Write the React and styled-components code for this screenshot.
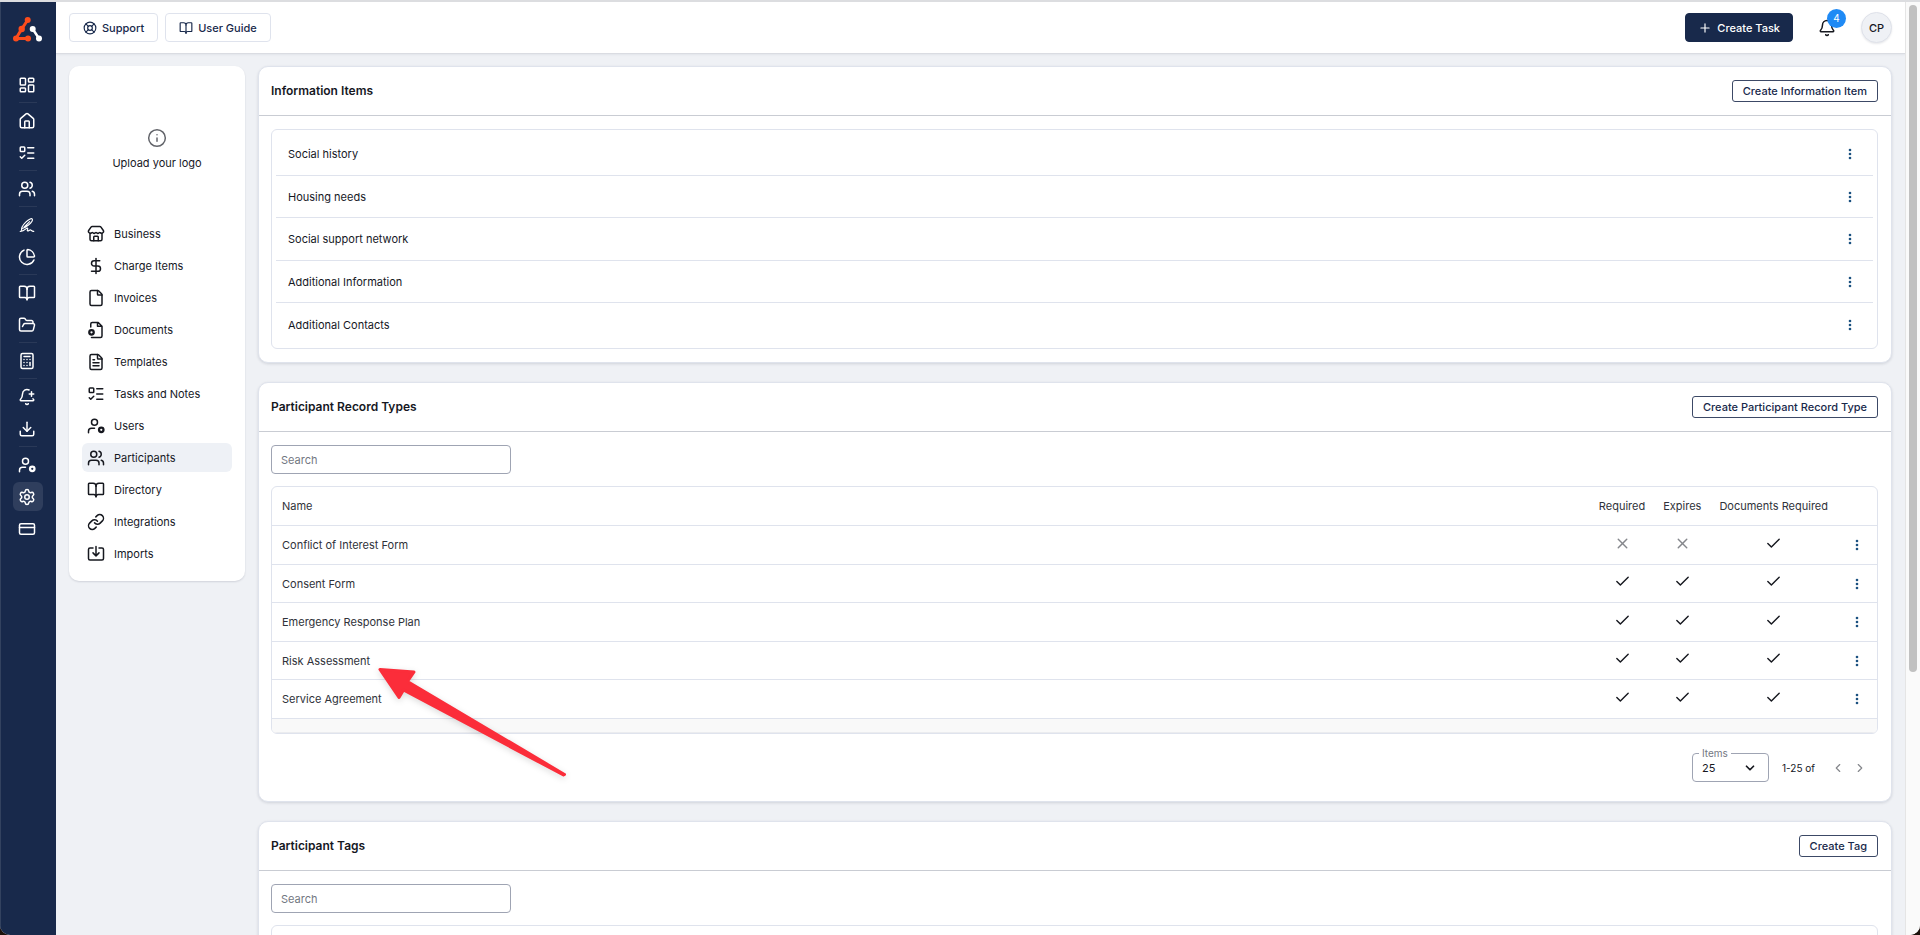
import styled, { createGlobalStyle } from "styled-components";
import {
    BellPlus, Bell, BookOpen, Calculator, Check, ChevronDown, ChevronLeft, ChevronRight, CreditCard,
    DollarSign, Download, File, FileText, FolderOpen, House, Info, LayoutDashboard, LifeBuoy, Link,
    ListTodo, ChartPie, Plus, Settings, Store, Users, X
} from "lucide-react";

const GlobalStyle = createGlobalStyle`
    * {
        box-sizing: border-box;
    }
    body {
        margin: 0;
        background-color: #1d120c;
        color: #16181f;
        font-family: Inter, "Liberation Sans", sans-serif;
        font-size: 11px;
        line-height: 16px;
    }
    button, input, select {
        font: inherit;
        color: inherit;
    }
    h1, h2, p, ul {
        margin: 0;
        padding: 0;
    }
`;

const Shell = styled.div`
    display: flex;
    height: 100vh;
    border-top: 2px solid #dcdde0;
    border-radius: 0 0 10px 10px;
    background-color: #eff1f5;
    overflow: hidden;
`;

const Sidebar = styled.nav`
    flex: none;
    display: flex;
    flex-direction: column;
    gap: 3px;
    width: 56px;
    padding: 13px 13px 0 12px;
    border-left: 1px solid #33425f;
    background-color: #18294b;
    svg {
        display: block;
    }
`;

const LogoLink = styled.a`
    height: 52px;
`;

const SideLink = styled.a`
    display: flex;
    align-items: center;
    height: 29px;
    padding-left: 5px;
    border-radius: 6px;
    background-color: ${({ $active }) => $active ? "#2f3e5d" : "transparent"};
    color: white;
`;

const SideDivider = styled.div`
    width: 18px;
    height: 1px;
    margin-left: 6px;
    background-color: #2a3958;
`;

const Page = styled.div`
    flex: 1;
    min-width: 0;
    display: flex;
    flex-direction: column;
`;

const Header = styled.header`
    flex: none;
    display: flex;
    align-items: center;
    gap: 7px;
    height: 52px;
    padding: 0 13px;
    border-bottom: 1px solid #dadce2;
    background-color: white;
    box-shadow: 0 1px 2px rgba(20, 30, 60, .06);
`;

const HeaderButton = styled.button`
    display: flex;
    align-items: center;
    gap: 5px;
    height: 29px;
    padding: 0 ${({ $primary }) => $primary ? "12px" : "13px"};
    border: 1px solid ${({ $primary }) => $primary ? "#18294b" : "#dfe3ed"};
    border-radius: 4px;
    background-color: ${({ $primary }) => $primary ? "#18294b" : "white"};
    color: ${({ $primary }) => $primary ? "white" : "#18294b"};
    font-weight: 500;
`;

const HeaderRight = styled.div`
    display: flex;
    align-items: center;
    gap: 25px;
    margin-left: auto;
`;

const BellButton = styled.button`
    position: relative;
    display: flex;
    padding: 0;
    border: none;
    background: none;
`;

const BellCount = styled.span`
    position: absolute;
    top: -10px;
    right: -10px;
    width: 19px;
    height: 19px;
    border-radius: 50%;
    background-color: #1f8af5;
    color: white;
    font-size: 10px;
    line-height: 19px;
    text-align: center;
`;

const Avatar = styled.button`
    width: 31px;
    height: 31px;
    padding: 0;
    border: 1px solid #dfe2ea;
    border-radius: 50%;
    background-color: #eff1f5;
    box-shadow: 0 1px 2px rgba(20, 30, 60, .1);
    font-weight: 500;
`;

const Content = styled.div`
    flex: 1;
    min-height: 0;
    display: flex;
    align-items: flex-start;
    gap: 13px;
    padding: 12px 13px;
    overflow: hidden;
`;

const Panel = styled.aside`
    flex: none;
    width: 176px;
    padding: 62px 13px 13px;
    border-radius: 10px;
    background-color: white;
    box-shadow: 0 1px 2px rgba(20, 30, 60, .14);
`;

const Upload = styled.button`
    display: flex;
    flex-direction: column;
    align-items: center;
    gap: 7px;
    width: 100%;
    margin-bottom: 48px;
    padding: 0;
    border: none;
    background: none;
    svg {
        color: #63656b;
    }
`;

const Menu = styled.ul`
    display: flex;
    flex-direction: column;
    gap: 3px;
    list-style: none;
`;

const MenuLink = styled.a`
    display: flex;
    align-items: center;
    gap: 9px;
    height: 29px;
    padding-left: 5px;
    border-radius: 6px;
    background-color: ${({ $active }) => $active ? "#eef1f6" : "transparent"};
    color: #16181f;
    text-decoration: none;
`;

const Main = styled.main`
    flex: 1;
    min-width: 0;
    display: flex;
    flex-direction: column;
    gap: 19px;
`;

const Card = styled.section`
    border: 1px solid #dfe3ec;
    border-radius: 10px;
    background-color: white;
    box-shadow: 0 1px 3px rgba(20, 30, 60, .14);
`;

const CardHeader = styled.div`
    display: flex;
    align-items: center;
    justify-content: space-between;
    height: 49px;
    padding: 0 13px 0 12px;
    border-bottom: 1px solid #c9ccd3;
    h2 {
        font-size: 12px;
        font-weight: 600;
    }
`;

const CardBody = styled.div`
    display: flex;
    flex-direction: column;
    gap: 12px;
    padding: 13px 13px 13px 12px;
`;

const OutlineButton = styled.button`
    height: 22px;
    padding: 0 10px;
    border: 1px solid #3c4966;
    border-radius: 3px;
    background-color: white;
    color: #18294b;
    font-weight: 500;
    line-height: 20px;
`;

const ItemList = styled.ul`
    padding: 3px 4px 2px;
    border: 1px solid #dfe3ed;
    border-radius: 6px;
    list-style: none;
`;

const Item = styled.li`
    display: flex;
    align-items: center;
    justify-content: space-between;
    height: 43px;
    padding: 0 17px 0 12px;
    border-bottom: 1px solid #dfe3ed;
    &:nth-child(even) {
        height: 42px;
    }
    &:last-child {
        border-bottom: none;
    }
`;

const DotsButton = styled.button`
    display: inline-flex;
    padding: 0;
    border: none;
    background: none;
    color: #1b5180;
    vertical-align: middle;
`;

const SearchInput = styled.input`
    width: 240px;
    height: 29px;
    padding: 0 9px;
    border: 1px solid #9fa4b3;
    border-radius: 4px;
    &::placeholder {
        color: #737782;
        opacity: 1;
    }
`;

const TableFrame = styled.div`
    border: 1px solid #dfe3ed;
    border-radius: 6px;
    overflow: hidden;
`;

const Table = styled.table`
    width: 100%;
    border-spacing: 0;
    color: #2f323a;
    th, td {
        height: 39px;
        padding: 0 9px;
        border-bottom: 1px solid #dfe3ed;
        text-align: center;
        white-space: nowrap;
    }
    th {
        font-weight: 400;
    }
    tbody tr:nth-child(even) td {
        height: 38px;
    }
    th:first-child, td:first-child {
        width: 100%;
        padding-left: 10px;
        text-align: left;
    }
    td:last-child {
        padding: 0 14px;
        line-height: 1px;
    }
    svg {
        display: inline-block;
        vertical-align: middle;
    }
`;

const Mark = styled.span`
    display: block;
    padding-bottom: 4px;
    color: ${({ $on }) => $on ? "#16181f" : "#85878c"};
`;

const TableFoot = styled.div`
    height: 14px;
    border-bottom: 1px solid #ebecef;
    background-color: #f9f9f9;
`;

const Pager = styled.div`
    display: flex;
    align-items: center;
    justify-content: flex-end;
    gap: 8px;
    margin: 7px 0 6px;
    padding-right: 11px;
`;

const ItemsField = styled.div`
    position: relative;
    width: 77px;
    label {
        position: absolute;
        top: -8px;
        left: 7px;
        padding: 0 3px;
        background-color: white;
        color: #737782;
        font-size: 10px;
    }
    select {
        display: block;
        width: 100%;
        height: 29px;
        padding: 0 9px;
        border: 1px solid #9fa4b3;
        border-radius: 4px;
        background-color: transparent;
        appearance: none;
    }
    svg {
        position: absolute;
        top: 8px;
        right: 12px;
        pointer-events: none;
    }
`;

const PagerRange = styled.span`
    padding: 0 8px 0 5px;
    font-size: 10px;
`;

const PagerButton = styled.button`
    display: flex;
    padding: 0;
    border: none;
    background: none;
    color: #85878c;
`;

const ScrollTrack = styled.div`
    flex: none;
    width: 15px;
    padding: 3px;
    border-left: 1px solid #e5e5e5;
    background-color: #fafafa;
`;

const ScrollThumb = styled.div`
    width: 8px;
    height: 72%;
    border-radius: 4px;
    background-color: #c1c1c1;
`;

const Arrow = styled.svg`
    position: absolute;
    top: 660px;
    left: 370px;
    filter: drop-shadow(0 2px 3px rgba(0, 0, 0, .15));
    pointer-events: none;
`;

const Svg = ({ children, size = 18, strokeWidth = 2 }) => (
    <svg width={size} height={size} viewBox="0 0 24 24" fill="none" stroke="currentColor"
        strokeWidth={strokeWidth} strokeLinecap="round" strokeLinejoin="round">{children}</svg>
);

const Logo = () => (
    <svg width="30" height="27" viewBox="0 0 30 27" strokeLinecap="round">
        <g stroke="#fc4c1c" fill="#fc4c1c" strokeWidth="0">
            <path d="M14.700 5 8.700 14 3 23.500H15" fill="none" strokeWidth="3" strokeLinejoin="round" />
            <circle cx="14.700" cy="5" r="3" />
            <circle cx="8.700" cy="14" r="3.200" />
            <circle cx="3" cy="23.500" r="3" />
            <circle cx="15" cy="23.500" r="3" />
        </g>
        <g stroke="white" fill="white" strokeWidth="0">
            <path d="M19.700 14 26 23.500" strokeWidth="2.500" />
            <circle cx="19.700" cy="14" r="3" />
            <circle cx="26" cy="23.500" r="3" />
        </g>
    </svg>
);

const Signature = () => (
    <Svg strokeWidth={1.5}>
        <path d="M3 20.500c3 0 5-1 7-3 1.500-1.500 3-2 3-.5s-1.500 3 0 3 2-1.500 3.500-1.500 1 2 4.500 2" />
        <path d="M5 19.500c-1-3 1-7 5-11s8-6 9-4.500-2 5.500-5 8-6 4-8.500 4.500M8 15l7.500-7.500" />
    </Svg>
);

const UserCog = () => (
    <Svg>
        <circle cx="10" cy="7" r="4" />
        <path d="M2 21v-2a4 4 0 0 1 4-4h4" />
        <circle cx="19" cy="17" r="3" strokeWidth="3" />
    </Svg>
);

const FileCog = () => (
    <Svg>
        <path d="M5 8V4a2 2 0 0 1 2-2h8l5 5v13a2 2 0 0 1-2 2H6M14 2v5h6" />
        <circle cx="6" cy="15" r="3" strokeWidth="3" />
    </Svg>
);

const Import = () => (
    <Svg>
        <path d="M8 4H4a2 2 0 0 0-2 2v12a2 2 0 0 0 2 2h16a2 2 0 0 0 2-2V6a2 2 0 0 0-2-2h-4M12 2v12M8 10.500l4 4 4-4" />
    </Svg>
);

const Dots = () => (
    <svg width="12" height="12" viewBox="0 0 12 12" fill="currentColor">
        <circle cx="6" cy="2" r="1.300" />
        <circle cx="6" cy="6" r="1.300" />
        <circle cx="6" cy="10" r="1.300" />
    </svg>
);

const sideGroups = [
    [["Dashboard", LayoutDashboard]],
    [["Home", House], ["Tasks", ListTodo]],
    [["Participants", Users]],
    [["Sign", Signature], ["Reports", ChartPie]],
    [["Directory", BookOpen], ["Files", FolderOpen]],
    [["Calculator", Calculator]],
    [["Alerts", BellPlus], ["Downloads", Download]],
    [["Users", UserCog], ["Settings", Settings], ["Billing", CreditCard]],
];

const menuItems = [
    ["Business", Store],
    ["Charge Items", DollarSign],
    ["Invoices", File],
    ["Documents", FileCog],
    ["Templates", FileText],
    ["Tasks and Notes", ListTodo],
    ["Users", UserCog],
    ["Participants", Users],
    ["Directory", BookOpen],
    ["Integrations", Link],
    ["Imports", Import],
];

const infoItems = ["Social history", "Housing needs", "Social support network", "Additional Information", "Additional Contacts"];

const recordTypes = [
    { name: "Conflict of Interest Form", required: false, expires: false, documents: true },
    { name: "Consent Form", required: true, expires: true, documents: true },
    { name: "Emergency Response Plan", required: true, expires: true, documents: true },
    { name: "Risk Assessment", required: true, expires: true, documents: true },
    { name: "Service Agreement", required: true, expires: true, documents: true },
];

const Flag = ({ on }) => (
    <Mark $on={on}>{on ? <Check size={17} /> : <X size={17} />}</Mark>
);

const App = () => {
    return (
        <>
            <GlobalStyle />
            <Shell>
                <Sidebar>
                    <LogoLink href="#" aria-label="Home page"><Logo /></LogoLink>
                    {sideGroups.map((group, i) => [
                        i > 0 && <SideDivider key={i} />,
                        ...group.map(([label, Icon]) => (
                            <SideLink key={label} href="#" aria-label={label} $active={label === "Settings"}>
                                <Icon size={18} />
                            </SideLink>
                        ))
                    ])}
                </Sidebar>
                <Page>
                    <Header>
                        <HeaderButton><LifeBuoy size={14} />Support</HeaderButton>
                        <HeaderButton><BookOpen size={14} />User Guide</HeaderButton>
                        <HeaderRight>
                            <HeaderButton $primary><Plus size={14} />Create Task</HeaderButton>
                            <BellButton aria-label="Notifications"><Bell size={18} /><BellCount>4</BellCount></BellButton>
                            <Avatar>CP</Avatar>
                        </HeaderRight>
                    </Header>
                    <Content>
                        <Panel>
                            <Upload><Info size={20} strokeWidth={1.8} />Upload your logo</Upload>
                            <Menu>
                                {menuItems.map(([label, Icon]) => (
                                    <li key={label}>
                                        <MenuLink href="#" $active={label === "Participants"}><Icon size={18} />{label}</MenuLink>
                                    </li>
                                ))}
                            </Menu>
                        </Panel>
                        <Main>
                            <Card>
                                <CardHeader>
                                    <h2>Information Items</h2>
                                    <OutlineButton>Create Information Item</OutlineButton>
                                </CardHeader>
                                <CardBody>
                                    <ItemList>
                                        {infoItems.map((item) => (
                                            <Item key={item}>{item}<DotsButton aria-label="Options"><Dots /></DotsButton></Item>
                                        ))}
                                    </ItemList>
                                </CardBody>
                            </Card>
                            <Card>
                                <CardHeader>
                                    <h2>Participant Record Types</h2>
                                    <OutlineButton>Create Participant Record Type</OutlineButton>
                                </CardHeader>
                                <CardBody>
                                    <SearchInput type="text" placeholder="Search" aria-label="Search record types" />
                                    <TableFrame>
                                        <Table>
                                            <thead>
                                                <tr>
                                                    <th>Name</th>
                                                    <th>Required</th>
                                                    <th>Expires</th>
                                                    <th>Documents Required</th>
                                                    <th></th>
                                                </tr>
                                            </thead>
                                            <tbody>
                                                {recordTypes.map((type) => (
                                                    <tr key={type.name}>
                                                        <td>{type.name}</td>
                                                        <td><Flag on={type.required} /></td>
                                                        <td><Flag on={type.expires} /></td>
                                                        <td><Flag on={type.documents} /></td>
                                                        <td><DotsButton aria-label="Options"><Dots /></DotsButton></td>
                                                    </tr>
                                                ))}
                                            </tbody>
                                        </Table>
                                        <TableFoot />
                                    </TableFrame>
                                    <Pager>
                                        <ItemsField>
                                            <label htmlFor="items">Items</label>
                                            <select id="items"><option>25</option></select>
                                            <ChevronDown size={14} strokeWidth={3} />
                                        </ItemsField>
                                        <PagerRange>1-25 of</PagerRange>
                                        <PagerButton aria-label="Previous"><ChevronLeft size={14} /></PagerButton>
                                        <PagerButton aria-label="Next"><ChevronRight size={14} /></PagerButton>
                                    </Pager>
                                </CardBody>
                            </Card>
                            <Card>
                                <CardHeader>
                                    <h2>Participant Tags</h2>
                                    <OutlineButton>Create Tag</OutlineButton>
                                </CardHeader>
                                <CardBody>
                                    <SearchInput type="text" placeholder="Search" aria-label="Search tags" />
                                    <TableFrame>
                                        <Table>
                                            <thead><tr><th></th></tr></thead>
                                        </Table>
                                    </TableFrame>
                                </CardBody>
                            </Card>
                        </Main>
                    </Content>
                </Page>
                <ScrollTrack><ScrollThumb /></ScrollTrack>
            </Shell>
            <Arrow width="206" height="124" viewBox="0 0 206 124">
                <path d="M10 9.500 44 12 37.500 21.500 194.500 114.500 193.500 115 33.500 30 29 37.500Z" fill="#fb2d3a" stroke="#fb2d3a" strokeWidth="3" strokeLinejoin="round" />
            </Arrow>
        </>
    );
}
export default App;
